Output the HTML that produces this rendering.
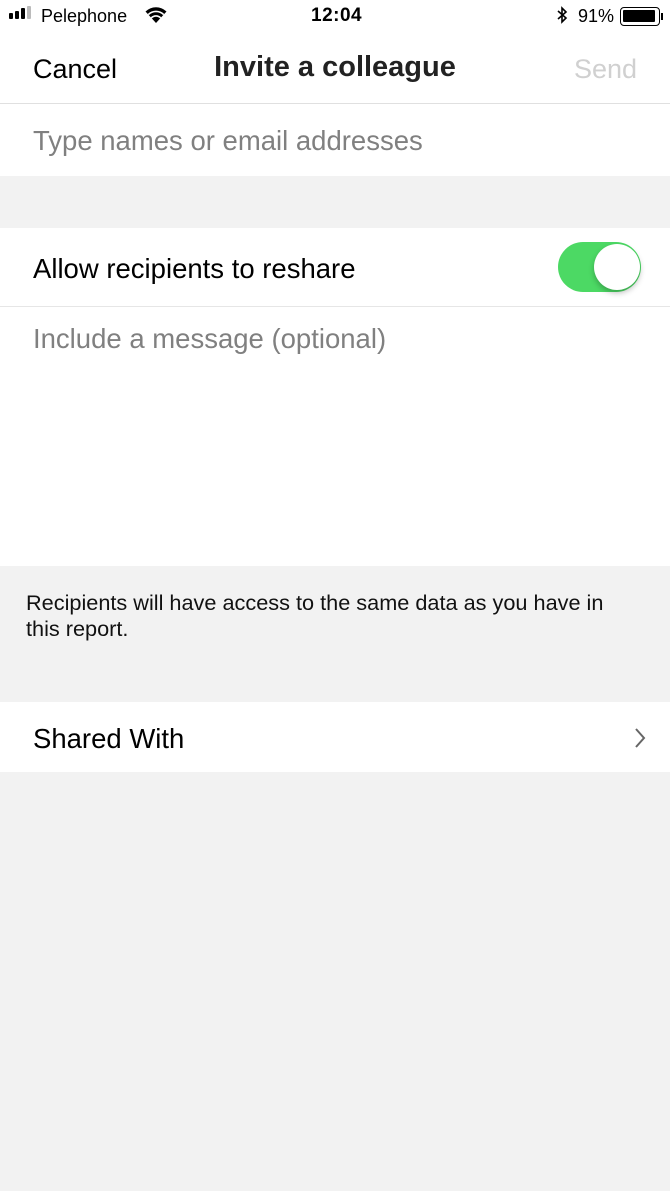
<!DOCTYPE html>
<html><head><meta charset="utf-8"><style>
*{margin:0;padding:0;box-sizing:border-box}
body{width:670px;height:1191px;background:#f2f2f2;font-family:"Liberation Sans",Arial,sans-serif;position:relative;overflow:hidden;color:#000}
.abs{position:absolute}
.white{background:#fff;position:absolute;left:0;width:670px}
</style></head><body>
<div class="white" style="top:0;height:104px;border-bottom:1px solid #e0e0e0"></div>
<div class="abs" style="left:9px;top:13px;width:4px;height:6px;background:#000;border-radius:1px"></div>
<div class="abs" style="left:15px;top:11px;width:4px;height:8px;background:#000;border-radius:1px"></div>
<div class="abs" style="left:21px;top:8px;width:4px;height:11px;background:#000;border-radius:1px"></div>
<div class="abs" style="left:27px;top:6px;width:4px;height:13px;background:#bbb;border-radius:1px"></div>
<div class="abs" style="left:41px;top:6px;font-size:18px">Pelephone</div>
<svg class="abs" style="left:144px;top:6px" width="24" height="18" viewBox="0 0 24 18"><path d="M12 17L1.5 5.5A15 15 0 0 1 22.5 5.5Z" fill="#000"/><path d="M4.3 8.6A11 11 0 0 1 19.7 8.6" stroke="#fff" stroke-width="1.6" fill="none"/><path d="M7.3 11.9A6.5 6.5 0 0 1 16.7 11.9" stroke="#fff" stroke-width="1.6" fill="none"/></svg>
<div class="abs" style="left:311px;top:5px;font-size:19px;font-weight:bold;letter-spacing:0.5px">12:04</div>
<svg class="abs" style="left:556px;top:6px" width="12" height="18" viewBox="0 0 12 18"><path d="M2 5L10 12L6 16V2L10 6L2 13" stroke="#000" stroke-width="1.6" fill="none"/></svg>
<div class="abs" style="left:578px;top:6px;font-size:18px">91%</div>
<div class="abs" style="left:620px;top:7px;width:40px;height:19px;border:1.5px solid #000;border-radius:4px;padding:2px"><div style="width:32px;height:12px;background:#000;border-radius:1px"></div></div>
<div class="abs" style="left:661px;top:13px;width:2px;height:7px;background:#000"></div>
<div class="abs" style="left:33px;top:54px;font-size:27px">Cancel</div>
<div class="abs" style="left:0;width:670px;text-align:center;top:51px;font-size:29px;font-weight:bold;color:#222">Invite a colleague</div>
<div class="abs" style="left:574px;top:54px;font-size:27px;color:#d0d0d0">Send</div>
<div class="white" style="top:104px;height:72px"></div>
<div class="abs" style="left:33px;top:125px;font-size:27.5px;color:#808080">Type names or email addresses</div>
<div class="white" style="top:228px;height:338px"></div>
<div class="abs" style="left:0;top:306px;width:670px;height:1px;background:#e6e6e6"></div>
<div class="abs" style="left:33px;top:253px;font-size:27.5px">Allow recipients to reshare</div>
<div class="abs" style="left:558px;top:242px;width:83px;height:50px;border-radius:25px;background:#4cd964"></div>
<div class="abs" style="left:594px;top:244px;width:46px;height:46px;border-radius:50%;background:#fff;box-shadow:0 3px 6px rgba(0,0,0,.25)"></div>
<div class="abs" style="left:33px;top:323px;font-size:27.5px;color:#808080">Include a message (optional)</div>
<div class="abs" style="left:26px;top:590px;width:605px;font-size:21.7px;line-height:26px;color:#111">Recipients will have access to the same data as you have in this report.</div>
<div class="white" style="top:702px;height:70px"></div>
<div class="abs" style="left:33px;top:723px;font-size:27.5px">Shared With</div>
<svg class="abs" style="left:633px;top:727px" width="14" height="22" viewBox="0 0 14 22"><path d="M3 2L11 11L3 20" stroke="#666" stroke-width="2" fill="none"/></svg>
</body></html>
